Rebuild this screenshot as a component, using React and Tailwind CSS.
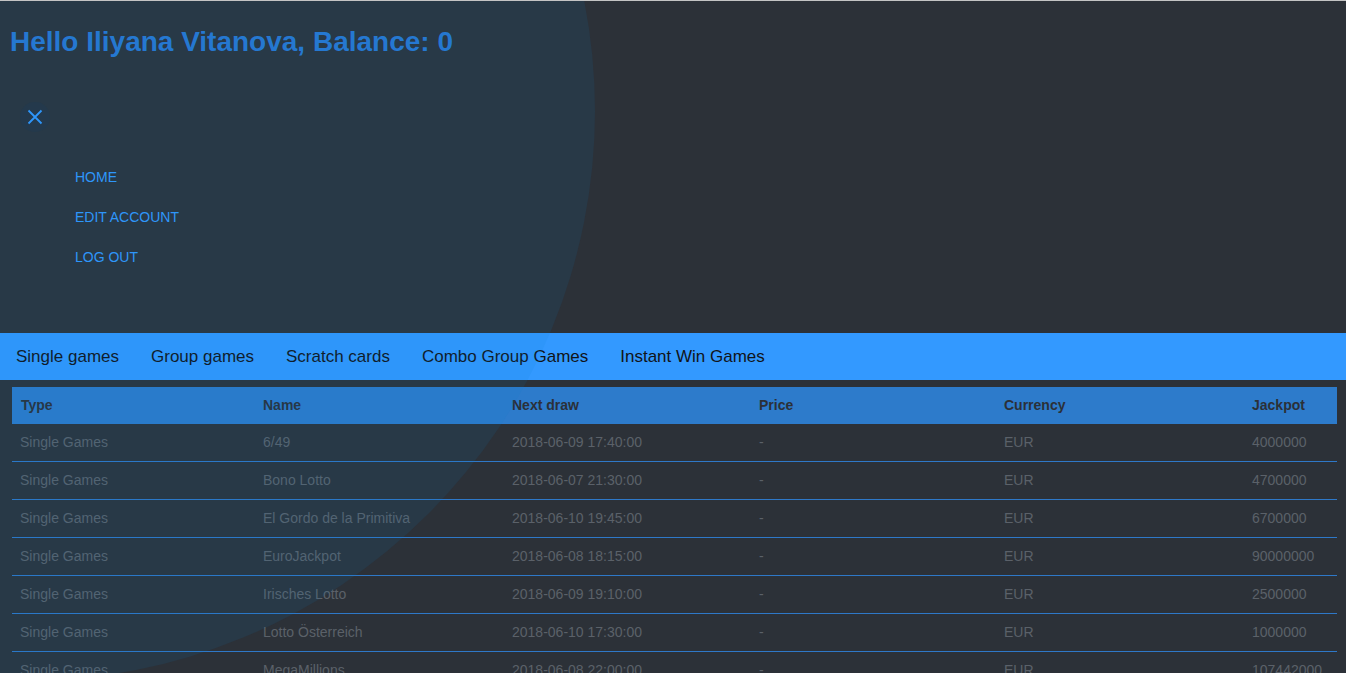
import React from 'react';

const rows = [
  ['Single Games', '6/49', '2018-06-09 17:40:00', '-', 'EUR', '4000000'],
  ['Single Games', 'Bono Lotto', '2018-06-07 21:30:00', '-', 'EUR', '4700000'],
  ['Single Games', 'El Gordo de la Primitiva', '2018-06-10 19:45:00', '-', 'EUR', '6700000'],
  ['Single Games', 'EuroJackpot', '2018-06-08 18:15:00', '-', 'EUR', '90000000'],
  ['Single Games', 'Irisches Lotto', '2018-06-09 19:10:00', '-', 'EUR', '2500000'],
  ['Single Games', 'Lotto Österreich', '2018-06-10 17:30:00', '-', 'EUR', '1000000'],
  ['Single Games', 'MegaMillions', '2018-06-08 22:00:00', '-', 'EUR', '107442000'],
];

const headers = ['Type', 'Name', 'Next draw', 'Price', 'Currency', 'Jackpot'];
const tabs = ['Single games', 'Group games', 'Scratch cards', 'Combo Group Games', 'Instant Win Games'];
const menu = ['HOME', 'EDIT ACCOUNT', 'LOG OUT'];

const cols = 'grid grid-cols-[242px_249px_247px_245px_248px_1fr]';

export default function App() {
  return (
    <div className="relative min-h-screen overflow-hidden bg-[#2c3138] border-t border-[#c4c4c4] font-['Liberation_Sans',Arial,sans-serif]">
      {/* header */}
      <h1 className="ml-[10px] mt-[25px] text-[28px] leading-8 font-bold text-[#2978d2]">
        Hello Iliyana Vitanova, Balance: 0
      </h1>

      {/* side menu */}
      <div className="mt-[44px] ml-[20px]">
        <button className="w-[30px] h-[30px] rounded-full bg-[#27323e] flex items-center justify-center">
          <svg width="16" height="16" viewBox="0 0 16 16" fill="none" stroke="#3399ff" strokeWidth="1.8">
            <path d="M1.5 1.5 L14.5 14.5 M14.5 1.5 L1.5 14.5" />
          </svg>
        </button>
      </div>
      <ul className="mt-[35px] ml-[75px] flex flex-col gap-5">
        {menu.map((m) => (
          <li key={m} className="text-[14px] leading-5 text-[#3399ff]">{m}</li>
        ))}
      </ul>

      {/* game tabs */}
      <nav className="mt-[66px] h-[47px] bg-[#3399ff] flex items-center">
        {tabs.map((t) => (
          <span key={t} className="px-4 text-[17px] text-[#111418]">{t}</span>
        ))}
      </nav>

      {/* games table */}
      <div className="mt-[7px] ml-[12px] mr-[9px]">
        <div className={`${cols} h-[37px] items-center bg-[#2d7bcb] text-[14px] font-bold text-[#2b3038]`}>
          {headers.map((h) => (
            <div key={h} className="pl-[9px]">{h}</div>
          ))}
        </div>
        {rows.map((r, i) => (
          <div key={i} className={`${cols} h-[38px] items-center border-b border-[#2e78c8] text-[14px] text-[#5b6169]`}>
            {r.map((c, j) => (
              <div key={j} className={j === 0 ? 'pl-[8px] whitespace-nowrap' : 'pl-[9px] whitespace-nowrap'}>{c}</div>
            ))}
          </div>
        ))}
      </div>

      {/* sidebar backdrop curve */}
      <div className="pointer-events-none absolute left-[-595px] top-[-460px] w-[1190px] h-[1140px] rounded-full bg-[rgba(14,129,206,0.1)]" />
    </div>
  );
}
